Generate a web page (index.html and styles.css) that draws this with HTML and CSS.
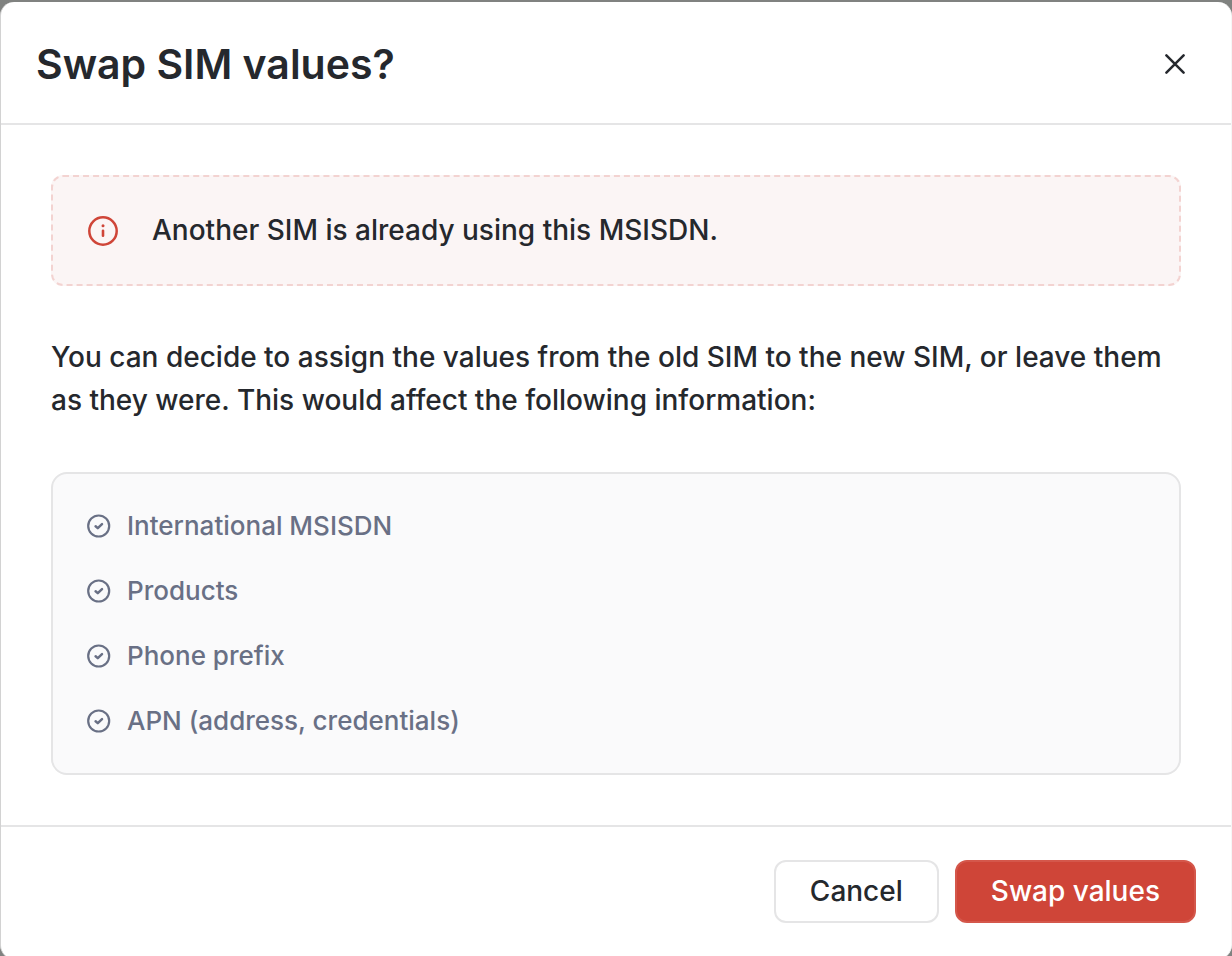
FILE: index.html
```html
<!DOCTYPE html>
<html lang="en">
<head>
    <meta charset="UTF-8">
    <meta name="viewport" content="width=device-width, initial-scale=1.0">
    <title>Swap SIM values?</title>
    <link rel="stylesheet" href="styles.css">
</head>
<body>

    <div class="modal" role="dialog" aria-modal="true" aria-labelledby="modal-title">
        <header class="modal-header">
            <h2 id="modal-title">Swap SIM values?</h2>
            <button class="close" type="button" aria-label="Close">
                <svg width="20" height="20" viewBox="0 0 20 20" fill="none" stroke="currentColor" stroke-width="2.5" stroke-linecap="round">
                    <path d="M1.4 1.4 18.6 18.6M18.6 1.4 1.4 18.6"/>
                </svg>
            </button>
        </header>

        <div class="modal-body">
            <div class="alert" role="alert">
                <svg class="alert-icon" width="32" height="32" viewBox="0 0 32 32" fill="none" stroke="currentColor" stroke-width="2.5">
                    <circle cx="16" cy="16" r="13.7"/>
                    <path d="M16 15.8V20.8" stroke-width="2.6" stroke-linecap="round"/>
                    <circle cx="16" cy="10.7" r="1.5" fill="currentColor" stroke="none"/>
                </svg>
                <p>Another SIM is already using this MSISDN.</p>
            </div>

            <p class="description">You can decide to assign the values from the old SIM to the new SIM, or leave them as they were. This would affect the following information:</p>

            <ul class="values">
                <li>
                    <svg width="24" height="24" viewBox="0 0 24 24" fill="none" stroke="currentColor" stroke-width="2.2" stroke-linecap="round" stroke-linejoin="round">
                        <circle cx="11.7" cy="12" r="10.5"/>
                        <path d="M8.6 12.2 10.8 14.1 15 10.2" stroke-width="2.5"/>
                    </svg>
                    International MSISDN
                </li>
                <li>
                    <svg width="24" height="24" viewBox="0 0 24 24" fill="none" stroke="currentColor" stroke-width="2.2" stroke-linecap="round" stroke-linejoin="round">
                        <circle cx="11.7" cy="12" r="10.5"/>
                        <path d="M8.6 12.2 10.8 14.1 15 10.2" stroke-width="2.5"/>
                    </svg>
                    Products
                </li>
                <li>
                    <svg width="24" height="24" viewBox="0 0 24 24" fill="none" stroke="currentColor" stroke-width="2.2" stroke-linecap="round" stroke-linejoin="round">
                        <circle cx="11.7" cy="12" r="10.5"/>
                        <path d="M8.6 12.2 10.8 14.1 15 10.2" stroke-width="2.5"/>
                    </svg>
                    Phone prefix
                </li>
                <li>
                    <svg width="24" height="24" viewBox="0 0 24 24" fill="none" stroke="currentColor" stroke-width="2.2" stroke-linecap="round" stroke-linejoin="round">
                        <circle cx="11.7" cy="12" r="10.5"/>
                        <path d="M8.6 12.2 10.8 14.1 15 10.2" stroke-width="2.5"/>
                    </svg>
                    APN (address, credentials)
                </li>
            </ul>
        </div>

        <footer class="modal-footer">
            <button class="btn" type="button">Cancel</button>
            <button class="btn btn-danger" type="button">Swap values</button>
        </footer>
    </div>

</body>
</html>
```
FILE: styles.css
```css
:root {
    --text: #25282d;
    --muted: #697085;
    --border: #e5e5e6;
    --danger: #cf4538;
}

* {
    margin: 0;
    padding: 0;
    box-sizing: border-box;
}

body {
    height: 100vh;
    padding-top: 2px;
    overflow: hidden;
    background-color: #808280;
    color: var(--text);
    font-family: "Inter", "Liberation Sans", sans-serif;
    font-size: 28px;
    font-weight: 500;
    line-height: 43px;
}

.modal {
    background-color: white;
    border-left: 1px solid #d2d2d2;
    border-right: 1px solid #f6f6f6;
    border-radius: 14px;
}

.modal-header {
    display: flex;
    justify-content: space-between;
    align-items: center;
    padding: 36px 36px 33px 35px;
    border-bottom: 2px solid var(--border);
}

h2 {
    font-size: 41px;
    font-weight: 600;
    line-height: 52px;
}

.close {
    display: flex;
    padding: 10px;
    border: none;
    background: none;
    color: var(--text);
    cursor: pointer;
}

.modal-body {
    padding: 50px;
}

.alert {
    display: flex;
    align-items: center;
    gap: 33px;
    padding: 32px 34px;
    border: 2px dashed #f3d3d1;
    border-radius: 12px;
    background-color: #fbf5f5;
}

.alert-icon {
    flex-shrink: 0;
    color: var(--danger);
}

.description {
    margin: 50px 0;
}

.values {
    display: flex;
    flex-direction: column;
    gap: 25px;
    padding: 32px 34px;
    border: 2px solid var(--border);
    border-radius: 16px;
    background-color: #fafafb;
    color: var(--muted);
    font-size: 26px;
    line-height: 40px;
    list-style: none;
}

.values li {
    display: flex;
    align-items: center;
    gap: 16px;
}

.modal-footer {
    display: flex;
    justify-content: flex-end;
    gap: 16px;
    padding: 33px 35px 36px;
    border-top: 2px solid var(--border);
}

.btn {
    padding: 8px 34px;
    border: 2px solid var(--border);
    border-radius: 12px;
    background-color: white;
    color: var(--text);
    font: inherit;
    cursor: pointer;
}

.btn-danger {
    border-color: #d4574b;
    background-color: var(--danger);
    color: white;
}
```
